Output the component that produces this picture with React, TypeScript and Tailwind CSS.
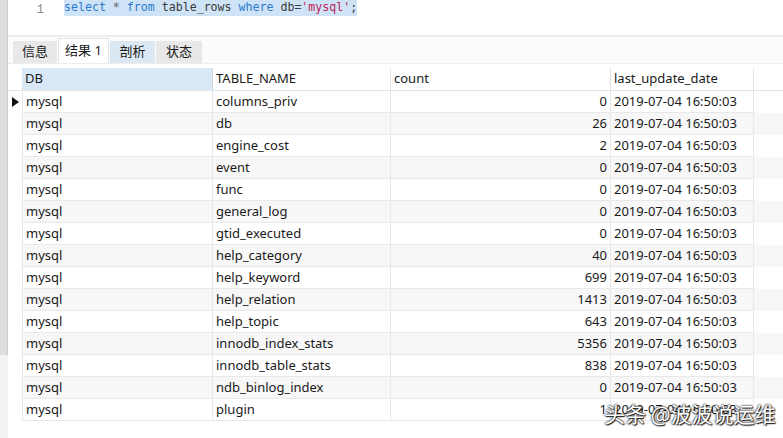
import React from "react";

const ROWS: [string, number][] = [
  ["columns_priv", 0],
  ["db", 26],
  ["engine_cost", 2],
  ["event", 0],
  ["func", 0],
  ["general_log", 0],
  ["gtid_executed", 0],
  ["help_category", 40],
  ["help_keyword", 699],
  ["help_relation", 1413],
  ["help_topic", 643],
  ["innodb_index_stats", 5356],
  ["innodb_table_stats", 838],
  ["ndb_binlog_index", 0],
  ["plugin", 1],
];

const UI_FONT = { fontFamily: '"Noto Sans", "Noto Sans CJK SC", sans-serif' };

export default function App() {
  return (
    <div className="relative w-[783px] h-[438px] overflow-hidden bg-white flex text-[#1a1a1a]" style={UI_FONT}>
      {/* left gutter strip */}
      <div className="w-[8px] flex flex-col shrink-0">
        <div className="h-[355px] bg-[#dedede] border-r border-[#cfcfcf]" />
        <div className="flex-1 bg-[#f2f2f2]" />
      </div>

      <div className="flex-1 flex flex-col">
        {/* ── Editor ── */}
        <div className="h-[35px] flex items-start">
          <div className="w-[36px] text-right pt-[1px] text-[12px] text-[#8a8a8a] font-['Liberation_Mono',monospace]">1</div>
          <div className="ml-[20px] h-[16px] bg-[#cfe3f6] flex items-center text-[11.6px] font-['DejaVu_Sans_Mono',monospace] whitespace-pre leading-none">
            <span className="text-[#2a7ad0]">select</span>
            <span className="text-[#6a6a6a]"> * </span>
            <span className="text-[#2a7ad0]">from</span>
            <span className="text-[#3a3a3a]"> table_rows </span>
            <span className="text-[#2a7ad0]">where</span>
            <span className="text-[#3a3a3a]"> db=</span>
            <span className="text-[#c0245a]">'mysql'</span>
            <span className="text-[#3a3a3a]">;</span>
          </div>
        </div>
        <div className="h-[2px] bg-[#ececec]" />

        {/* ── Tabs ── */}
        <div className="h-[27px] bg-[#fbfbfb] flex items-end pl-[5px] border-b border-[#ededed]">
          <Tab label="信息" w="w-[44px]" bg="bg-[#e8e8e8]" />
          <Tab label="结果 1" w="w-[51px]" bg="bg-white" active />
          <Tab label="剖析" w="w-[45px]" bg="bg-[#dbe8f3]" />
          <Tab label="状态" w="w-[46px]" bg="bg-[#e8e8e8]" />
        </div>

        {/* ── Grid ── */}
        <div className="mt-[4px] flex flex-col text-[13px]">
          <div className="flex h-[23px] border-b border-[#e3e3e3]">
            <div className="w-[14px]" />
            <div className="w-[191px] bg-[#d9e8f7] border-r border-[#d8d8d8] pl-[3px] flex items-center">DB</div>
            <div className="w-[178px] border-r border-[#e3e3e3] pl-[3px] flex items-center">TABLE_NAME</div>
            <div className="w-[220px] border-r border-[#e3e3e3] pl-[3px] flex items-center">count</div>
            <div className="w-[143px] border-r border-[#e3e3e3] pl-[3px] flex items-center">last_update_date</div>
          </div>
          {ROWS.map(([name, count], i) => (
            <div key={name} className={`flex h-[22px] ${i % 2 === 1 ? "bg-[#f7f7f7]" : "bg-white"}`}>
              <div className="w-[14px] bg-white flex items-center justify-center">
                {i === 0 && (
                  <svg width="7" height="10" viewBox="0 0 7 10">
                    <path d="M0 0 L7 5 L0 10 Z" fill="#111" />
                  </svg>
                )}
              </div>
              <div className="w-[191px] border-l border-r border-b border-[#e8e8e8] pl-[3px] flex items-center">mysql</div>
              <div className="w-[178px] border-r border-b border-[#e8e8e8] pl-[3px] flex items-center">{name}</div>
              <div className="w-[220px] border-r border-b border-[#e8e8e8] pr-[3px] flex items-center justify-end">{count}</div>
              <div className="w-[143px] border-r border-b border-[#e8e8e8] pl-[3px] flex items-center">2019-07-04 16:50:03</div>
            </div>
          ))}
        </div>
      </div>

      {/* watermark overlaid on the last row, as in the screenshot */}
      <div
        className="absolute left-[604px] top-[398px] text-[21px] text-white font-['Noto_Sans_CJK_SC',sans-serif]"
        style={{ textShadow: "0 0 2px #222, 0 0 2px #222, 1px 1px 1px #222" }}
      >
        头条 @波波说运维
      </div>
    </div>
  );
}

function Tab({ label, w, bg, active }: { label: string; w: string; bg: string; active?: boolean }) {
  return (
    <div
      className={`${w} ${bg} mr-[1px] text-[13px] flex items-center justify-center ${
        active ? "h-[25px] border-t border-l border-r border-[#e3e3e3]" : "h-[22px]"
      }`}
    >
      {label}
    </div>
  );
}
